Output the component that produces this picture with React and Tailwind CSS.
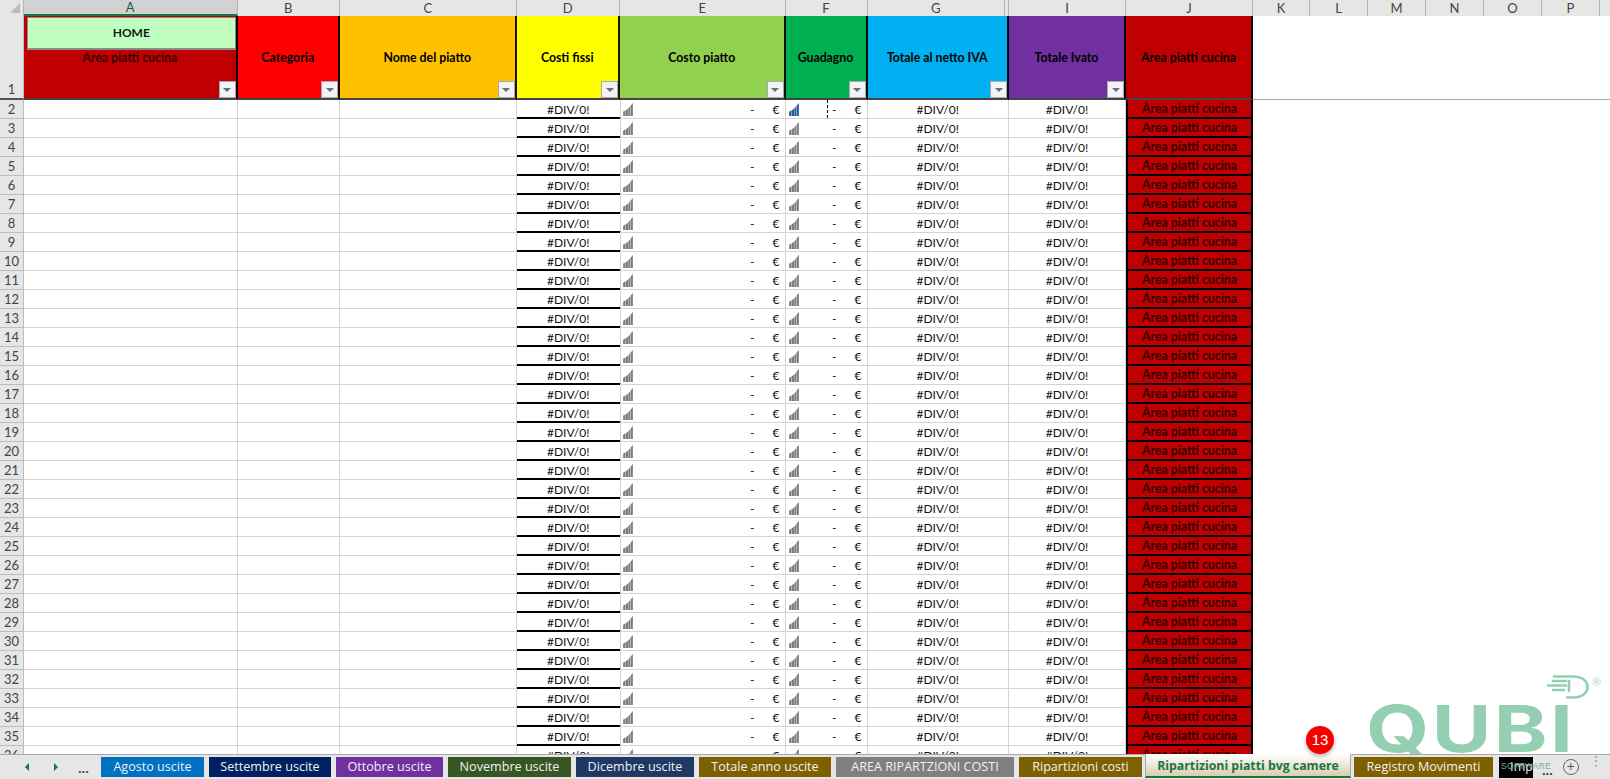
const COLS = 'grid grid-cols-[24px_213.5px_102.5px_176.5px_103.5px_165.5px_82px_141.5px_117px_127px_1fr]';

const LETTERS = [
  ['K', 'w-[57px]'],
  ['L', 'w-[58px]'],
  ['M', 'w-[58px]'],
  ['N', 'w-[58px]'],
  ['O', 'w-[58px]'],
  ['P', 'w-[58px]'],
];

const HEADERS = [
  { label: 'Area piatti cucina', bg: 'bg-[#c00000]', home: true, filter: true },
  { label: 'Categoria', bg: 'bg-[#ff0000]', filter: true },
  { label: 'Nome del piatto', bg: 'bg-[#ffc000]', filter: true },
  { label: 'Costi fissi', bg: 'bg-[#ffff00]', filter: true },
  { label: 'Costo piatto', bg: 'bg-[#92d050]', filter: true },
  { label: 'Guadagno', bg: 'bg-[#00b050]', filter: true },
  { label: 'Totale al netto IVA', bg: 'bg-[#00b0f0]', filter: true },
  { label: 'Totale Ivato', bg: 'bg-[#7030a0]', filter: true },
  { label: 'Area piatti cucina', bg: 'bg-[#c00000]' },
];

const TABS = [
  { label: 'Agosto uscite', cls: 'w-[103px] bg-[#0070c0] ml-[1px]' },
  { label: 'Settembre uscite', cls: 'w-[122px] bg-[#002060]' },
  { label: 'Ottobre uscite', cls: 'w-[107px] bg-[#7030a0]' },
  { label: 'Novembre uscite', cls: 'w-[123px] bg-[#375623]' },
  { label: 'Dicembre uscite', cls: 'w-[118px] bg-[#1f3864]' },
  { label: 'Totale anno uscite', cls: 'w-[132px] bg-[#7f6000]' },
  { label: 'AREA RIPARTZIONI COSTI', cls: 'w-[178px] bg-[#808080]' },
  { label: 'Ripartizioni costi', cls: 'w-[123px] bg-[#7f6000]' },
];

const ROWS = Array.from({ length: 35 }, (_, i) => i + 2);

function Bars({ blue }) {
  const fill = blue ? '#2a5a9c' : '#7d7d7d';
  return (
    <svg width="10" height="13" viewBox="0 0 9 12" className="shrink-0">
      <path d="M0 8l2.2-1.2V12H0z" fill={fill} />
      <path d="M2.5 6.6l2-1.4V12h-2z" fill={fill} />
      <path d="M4.8 5l1.9-2.2V12H4.8z" fill={fill} />
      <path d="M7 2.4L9 0v12H7z" fill={fill} />
    </svg>
  );
}

function FilterButton() {
  return (
    <div className="absolute right-0 bottom-0 w-[17px] h-[17px] bg-[#f2f3f7] border border-[#a9a9a9] flex items-center justify-center">
      <div className="w-0 h-0 border-x-[4px] border-x-transparent border-t-[4px] border-t-[#6d6d6d]" />
    </div>
  );
}

function ColLetter({ children, className = '' }) {
  return (
    <div className={`flex items-center justify-center border-r border-[#b5b5b5] ${className}`}>
      {children}
    </div>
  );
}

function Money({ blue, dash }) {
  return (
    <div className="relative flex items-center pl-[3px] pt-[1px] border-r border-b border-[#d4d4d4]">
      <Bars blue={blue} />
      {dash && <div className="absolute left-[41px] top-0 bottom-0 border-l border-dashed border-black" />}
      <span className="ml-auto">-</span>
      <span className="ml-[18px] mr-[5px]">€</span>
    </div>
  );
}

function Row({ n }) {
  const line = 'border-r border-b border-[#d4d4d4]';
  return (
    <div className={`${COLS} h-[19px] text-[12px] text-[#111] leading-none`}>
      <div className="flex items-center justify-center pt-[1px] bg-[#e6e6e6] text-[13px] text-[#444] border-r border-b border-[#bdbdbd]">{n}</div>
      <div className={line} />
      <div className={line} />
      <div className={line} />
      <div className="flex items-center justify-center pt-[2px] border-b-2 border-b-black border-r border-r-[#d4d4d4] -mr-[1px]">#DIV/0!</div>
      <Money />
      <Money blue={n === 2} dash={n === 2} />
      <div className={`flex items-center justify-center pt-[2px] ${line}`}>#DIV/0!</div>
      <div className={`flex items-center justify-center pt-[2px] ${line}`}>#DIV/0!</div>
      <div className="flex items-center justify-center pt-[2px] bg-[#c00000] border-2 border-t-0 border-black font-bold text-[12.3px] text-[#300000]">Area piatti cucina</div>
      <div />
    </div>
  );
}

function Logo() {
  return (
    <div className="absolute left-[1370px] top-[672px] w-[240px] h-[82px] overflow-hidden text-[#93cfb0]">
      <svg width="42" height="24" viewBox="0 0 42 24" className="absolute left-[177px] top-[3px]" fill="none" stroke="#93cfb0" strokeWidth="2.6" strokeLinecap="round">
        <path d="M7 1.5h19c9 0 14.5 4.5 14.5 10.5S35 22.5 26 22.5h-6" />
        <path d="M22 6v10" />
        <path d="M6 6h13" />
        <path d="M1 10.5h18" />
        <path d="M6 15h11" />
      </svg>
      <span className="absolute left-[222px] top-[4px] text-[11px] leading-none text-[#add9c2]">®</span>
      <span className="absolute -left-[4px] top-[25px] text-[64px] leading-[64px] font-bold tracking-[2px] font-['Inter',sans-serif] whitespace-nowrap origin-left scale-x-[1.27]">QUBI</span>
    </div>
  );
}

export default function App() {
  return (
    <div className="relative w-[1610px] h-[779px] overflow-hidden bg-white flex flex-col font-['Lato','Noto_Sans',sans-serif]">
      {/* column letters */}
      <div className={`${COLS} h-[16px] bg-[#e6e6e6] text-[13px] text-[#444] leading-none shrink-0`}>
        <div className="relative border-r border-[#b5b5b5]">
          <div className="absolute right-[3px] bottom-[3px] w-0 h-0 border-l-[10px] border-l-transparent border-b-[10px] border-b-[#bcbcbc]" />
        </div>
        <ColLetter className="bg-[#d2d2d2] border-b-2 border-b-[#217346] text-[#1f5c3a]">A</ColLetter>
        <ColLetter>B</ColLetter>
        <ColLetter>C</ColLetter>
        <ColLetter>D</ColLetter>
        <ColLetter>E</ColLetter>
        <ColLetter>F</ColLetter>
        <ColLetter>
          <span className="flex-1 text-center">G</span>
          <span className="h-full mr-[3px] border-r border-[#b5b5b5]" />
        </ColLetter>
        <ColLetter>I</ColLetter>
        <ColLetter>J</ColLetter>
        <div className="flex">
          {LETTERS.map(([l, w]) => (
            <ColLetter key={l} className={w}>{l}</ColLetter>
          ))}
        </div>
      </div>

      {/* row 1 */}
      <div className={`${COLS} h-[84px] shrink-0 text-[12.3px] font-bold text-black leading-none`}>
        <div className="flex items-end justify-center pb-[2px] bg-[#e6e6e6] text-[13px] text-[#444] font-normal border-r border-b-2 border-r-[#bdbdbd] border-b-[#555]">1</div>
        {HEADERS.map((h, i) => (
          <div key={i} className={`relative flex items-center justify-center pt-[2px] border-r-2 border-b-2 border-r-black/90 border-b-[#444] ${h.bg}`}>
            {h.home && (
              <div className="absolute left-[3px] top-[1px] right-0 h-[33px] bg-[#c1ffc1] border border-[#8a8a8a] border-b-2 flex items-center justify-center text-[12px] text-[#102010]">HOME</div>
            )}
            <span className={h.home ? 'text-[#3a0000]' : ''}>{h.label}</span>
            {h.filter && <FilterButton />}
          </div>
        ))}
        <div className="border-b border-[#a8a8a8]" />
      </div>

      {/* sheet body */}
      <div className="flex-1 min-h-0 overflow-hidden">
        {ROWS.map((n) => (
          <Row key={n} n={n} />
        ))}
      </div>

      <Logo />

      {/* badge */}
      <div className="absolute left-[1306px] top-[726px] z-20 w-[28px] h-[28px] rounded-full bg-[#f40000] shadow-[0_2px_4px_rgba(0,0,0,0.3)] flex items-center justify-center text-white text-[15px] font-['Liberation_Sans',sans-serif]">13</div>

      {/* sheet tabs */}
      <div className="relative z-10 h-[25px] shrink-0 bg-[#e6e6e6] border-t border-[#a8a8a8] flex items-stretch text-[12.6px] font-['Open_Sans',sans-serif] leading-none whitespace-nowrap">
        <div className="w-[100px] flex items-center text-[#217346] shrink-0">
          <div className="ml-[25px] w-0 h-0 border-y-[4px] border-y-transparent border-r-[4px] border-r-[#217346]" />
          <div className="ml-[25px] w-0 h-0 border-y-[4px] border-y-transparent border-l-[4px] border-l-[#217346]" />
          <span className="ml-[20px] mt-[4px] text-[#444] font-bold">...</span>
        </div>
        <div className="flex items-stretch gap-[5px] pt-[2px] pb-[2px]">
          {TABS.map((t) => (
            <div key={t.label} className={`flex items-center justify-center text-[#eef2f5] shrink-0 ${t.cls}`}>{t.label}</div>
          ))}
        </div>
        <div className="ml-[3px] -mt-[1px] mb-[1px] w-[206px] flex items-center justify-center pt-[2px] bg-gradient-to-b from-white to-[#d8cfae] border-x border-x-[#a8a8a8] border-b-2 border-b-[#217346] text-[#217346] text-[12.3px] font-bold shrink-0">Ripartizioni piatti bvg camere</div>
        <div className="ml-[3px] my-[2px] w-[139px] flex items-center justify-center bg-[#7f6000] text-[#eef2f5] shrink-0">Registro Movimenti</div>
        <div className="ml-[6px] mt-[2px] mb-[1px] w-[34px] flex items-center justify-end bg-black text-[#eef2f5] overflow-hidden shrink-0">Imp</div>
        <span className="absolute left-[1501px] top-[7px] text-[8.5px] tracking-[0.3px] text-[#6fb38f] font-['Liberation_Sans',sans-serif]">SOFTWARE</span>
        <span className="ml-[9px] mt-[10px] font-bold text-[#333]">...</span>
        <div className="ml-[10px] mt-[4px] w-[16px] h-[16px] rounded-full border border-[#666] flex items-center justify-center text-[#555] text-[14px]">+</div>
        <span className="ml-[11px] mt-[3px] text-[#999] text-[12px] leading-[6px] w-[4px]">⋮</span>
      </div>
    </div>
  );
}
